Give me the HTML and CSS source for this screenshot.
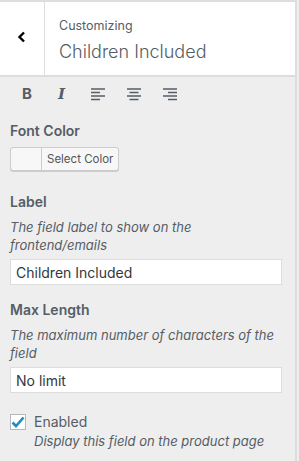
FILE: index.html
```html
<!DOCTYPE html>
<html lang="en">

<head>
    <meta charset="UTF-8">
    <meta name="viewport" content="width=device-width, initial-scale=1.0">
    <title>Customizing</title>
    <link rel="stylesheet" href="styles.css">
</head>

<body>
    <div class="panel">
        <div class="section-head">
            <button class="back" type="button" aria-label="Back">
                <svg width="10" height="12" viewBox="0 0 10 12"><path d="M7 1.5 L2.5 6 L7 10.5" fill="none" stroke="#000" stroke-width="2.4"/></svg>
            </button>
            <div class="head-title">
                <span class="crumb">Customizing</span>
                <h2>Children Included</h2>
            </div>
        </div>

        <div class="toolbar">
            <span class="tool tool-b">B</span>
            <span class="tool tool-i">I</span>
            <svg class="tool" width="16" height="14" viewBox="0 0 16 14"><path d="M1 2h14M1 5.5h9M1 9h14M1 12.5h9" stroke="#555d66" stroke-width="1.6"/></svg>
            <svg class="tool" width="16" height="14" viewBox="0 0 16 14"><path d="M1 2h14M3.5 5.5h9M1 9h14M3.5 12.5h9" stroke="#555d66" stroke-width="1.6"/></svg>
            <svg class="tool" width="16" height="14" viewBox="0 0 16 14"><path d="M1 2h14M6 5.5h9M1 9h14M6 12.5h9" stroke="#555d66" stroke-width="1.6"/></svg>
        </div>

        <div class="controls">
            <div class="control color-control">
                <span class="control-title">Font Color</span>
                <button class="color-btn" type="button">
                    <span class="swatch"></span>
                    <span class="color-text">Select Color</span>
                </button>
            </div>

            <div class="control">
                <label class="control-title" for="label">Label</label>
                <span class="description">The field label to show on the frontend/emails</span>
                <input type="text" id="label" value="Children Included">
            </div>

            <div class="control">
                <label class="control-title" for="maxlength">Max Length</label>
                <span class="description">The maximum number of characters of the field</span>
                <input type="text" id="maxlength" value="No limit">
            </div>

            <div class="control check-control">
                <label class="check">
                    <span class="box">
                        <svg width="14" height="12" viewBox="0 0 14 12"><path d="M1.5 6.5 L5 10 L12.5 1.5" fill="none" stroke="#1e8cbe" stroke-width="2.6"/></svg>
                    </span>
                    Enabled
                </label>
                <span class="description check-desc">Display this field on the product page</span>
            </div>
        </div>
    </div>
</body>

</html>
```

FILE: styles.css
```css
body {
    margin: 0;
    padding: 0;
    background: #eee;
    font-family: Inter, "Noto Sans", sans-serif;
    color: #555d66;
}

.panel {
    width: 297px;
    min-height: 461px;
    border-right: 2px solid #ddd;
    border-top: 2px solid #ddd;
    box-sizing: border-box;
}

.section-head {
    display: flex;
    height: 73px;
    background: #fff;
    border-bottom: 2px solid #ddd;
}

.back {
    width: 45px;
    flex: none;
    border: none;
    border-right: 1px solid #ddd;
    background: #fff;
    display: flex;
    align-items: center;
    justify-content: center;
    padding: 0 0 4px 0;
}

.head-title {
    padding: 15px 0 0 14px;
}

.crumb {
    display: block;
    font-size: 12.5px;
    color: #555d66;
    line-height: 18px;
}

h2 {
    margin: 5px 0 0 0;
    font-size: 18px;
    font-weight: 300;
    color: #555d66;
    line-height: 24px;
}

.toolbar {
    display: flex;
    align-items: center;
    height: 33px;
    padding-left: 22px;
    gap: 20px;
}

.tool {
    color: #555d66;
    font-size: 15px;
    width: 16px;
}

.tool-b {
    font-weight: 700;
}

.tool-i {
    font-style: italic;
    font-weight: 700;
    font-family: "DejaVu Serif", serif;
    margin-left: 0;
    width: 12px;
}

.controls {
    padding: 10px 13px 0 10px;
}

.control {
    display: flex;
    flex-direction: column;
    margin-bottom: 14px;
}

.color-control {
    margin-bottom: 20px;
}

.control-title {
    font-size: 14px;
    font-weight: 600;
    color: #555d66;
    line-height: 21px;
    margin-bottom: 6px;
}

.color-btn {
    display: flex;
    align-self: flex-start;
    height: 24px;
    padding: 0;
    border: 1px solid #ccc;
    border-radius: 3px;
    background: #f7f7f7;
    box-shadow: 0 1px 0 #ccc;
    font-family: inherit;
}

.swatch {
    width: 30px;
    height: 22px;
    border-right: 1px solid #ccc;
}

.color-text {
    font-size: 11.5px;
    color: #555;
    line-height: 22px;
    padding: 0 5px 0 5px;
}

.description {
    font-size: 13px;
    font-style: italic;
    line-height: 18px;
    color: #555d66;
    margin-bottom: 5px;
}

input {
    width: 100%;
    box-sizing: border-box;
    height: 26px;
    border: 1px solid #ddd;
    background: #fff;
    font-family: inherit;
    font-size: 14px;
    color: #32373c;
    padding: 0 5px;
    margin: 0;
}

.check {
    display: flex;
    align-items: center;
    font-size: 14px;
    color: #555d66;
    margin-top: 6px;
}

.box {
    width: 16px;
    height: 16px;
    box-sizing: border-box;
    border: 1px solid #b4b9be;
    background: #fff;
    display: flex;
    align-items: center;
    justify-content: center;
    margin-right: 8px;
}

.check-desc {
    padding-left: 24px;
    margin-top: 2px;
}
```
